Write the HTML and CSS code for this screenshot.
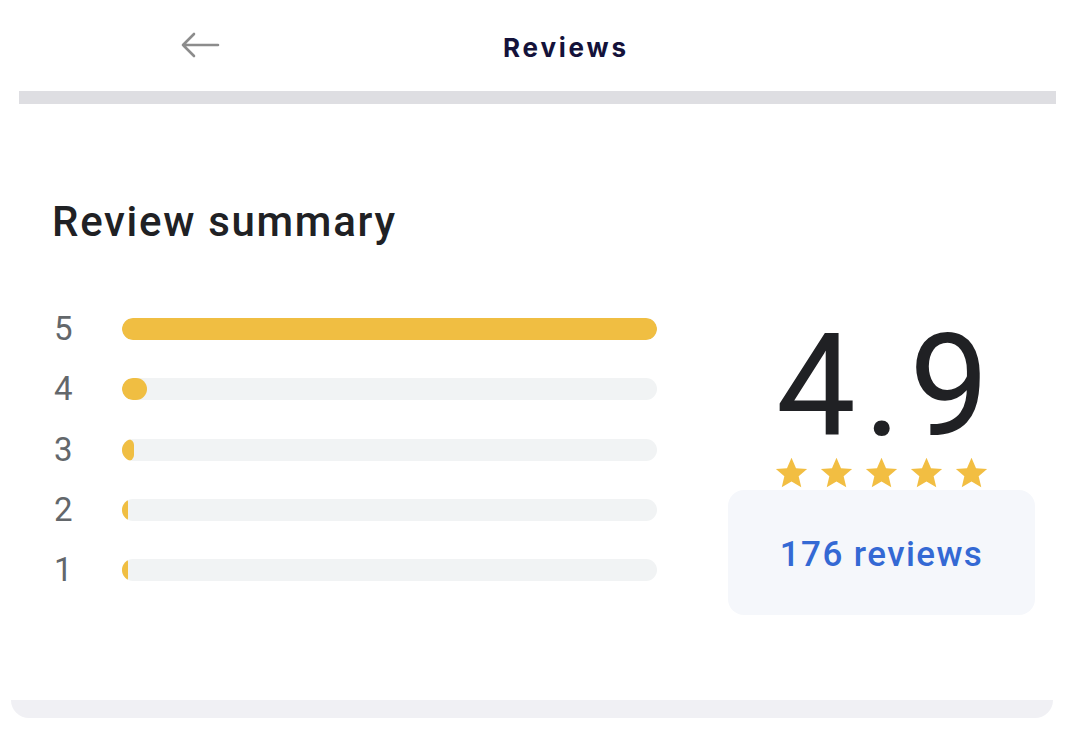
FILE: index.html
```html
<!DOCTYPE html>
<html>
<head>
<meta charset="utf-8">
<link rel="stylesheet" href="styles.css">
</head>
<body>
<div class="page">
  <header class="topbar">
    <svg class="back" width="40" height="26" viewBox="0 0 40 26">
      <path d="M38 13H3M14 2L3 13l11 11" fill="none" stroke="#8c8c8c" stroke-width="2.6" stroke-linecap="round" stroke-linejoin="round"/>
    </svg>
    <h1 class="title">Reviews</h1>
  </header>
  <div class="divider"></div>
  <main class="summary">
    <h2 class="heading">Review summary</h2>
    <div class="content">
      <div class="bars">
        <div class="row"><span class="num">5</span><div class="track"><div class="fill" style="width:100%"></div></div></div>
        <div class="row"><span class="num">4</span><div class="track"><div class="fill" style="width:25px"></div></div></div>
        <div class="row"><span class="num">3</span><div class="track"><div class="fill" style="width:12px"></div></div></div>
        <div class="row"><span class="num">2</span><div class="track"><div class="fill" style="width:6px"></div></div></div>
        <div class="row"><span class="num">1</span><div class="track"><div class="fill" style="width:6px"></div></div></div>
      </div>
      <div class="score">
        <div class="big">4.9</div>
        <div class="stars">
          <svg viewBox="0 0 24 24"><path d="M12 1.8l3.1 7.2 7.6.6-5.8 5 1.8 7.5L12 18.1l-6.7 4 1.8-7.5-5.8-5 7.6-.6z"/></svg>
          <svg viewBox="0 0 24 24"><path d="M12 1.8l3.1 7.2 7.6.6-5.8 5 1.8 7.5L12 18.1l-6.7 4 1.8-7.5-5.8-5 7.6-.6z"/></svg>
          <svg viewBox="0 0 24 24"><path d="M12 1.8l3.1 7.2 7.6.6-5.8 5 1.8 7.5L12 18.1l-6.7 4 1.8-7.5-5.8-5 7.6-.6z"/></svg>
          <svg viewBox="0 0 24 24"><path d="M12 1.8l3.1 7.2 7.6.6-5.8 5 1.8 7.5L12 18.1l-6.7 4 1.8-7.5-5.8-5 7.6-.6z"/></svg>
          <svg viewBox="0 0 24 24"><path d="M12 1.8l3.1 7.2 7.6.6-5.8 5 1.8 7.5L12 18.1l-6.7 4 1.8-7.5-5.8-5 7.6-.6z"/></svg>
        </div>
        <div class="count">176 reviews</div>
      </div>
    </div>
  </main>
  <div class="bottom"></div>
</div>
</body>
</html>
```

FILE: styles.css
```css
* { box-sizing: border-box; }
html, body { margin: 0; padding: 0; background: #ffffff; }
body { width: 1072px; height: 732px; overflow: hidden; font-family: Roboto, "Liberation Sans", sans-serif; }
.page { display: flex; flex-direction: column; }
.topbar { height: 91px; display: flex; align-items: center; padding-left: 180px; }
.back { display: block; margin-top: -2px; }
.title { margin: 4px 0 0 283px; font-family: Inter, sans-serif; font-weight: 700; font-size: 26px; letter-spacing: 2.8px; color: #14123a; }
.divider { height: 13px; margin: 0 16px 0 19px; background: #dedee2; }
.summary { height: 596px; padding: 92px 0 0 52px; }
.heading { margin: 0; font-family: Roboto, sans-serif; font-weight: 500; font-size: 42px; line-height: 52px; color: #202124; letter-spacing: 1.7px; }
.content { display: flex; margin-top: 70px; }
.bars { width: 605px; display: flex; flex-direction: column; gap: 38.3px; }
.row { display: flex; align-items: center; height: 22px; }
.num { width: 70px; font-size: 33px; color: #63676b; padding-left: 2px; line-height: 22px; }
.track { flex: 1; height: 22px; border-radius: 11px; background: #f1f3f4; overflow: hidden; }
.fill { height: 100%; border-radius: 11px; background: #f0be42; }
.score { margin-left: 71px; margin-top: -4px; width: 307px; display: flex; flex-direction: column; align-items: center; }
.big { font-size: 142px; line-height: 146px; color: #202124; letter-spacing: 8px; margin-left: 10px; }
.stars { display: flex; gap: 10px; margin-top: -5px; height: 35px; position: relative; z-index: 1; }
.stars svg { width: 35px; height: 35px; fill: #f2be42; }
.count { width: 307px; height: 125px; border-radius: 16px; background: #f5f7fb; display: flex; align-items: center; justify-content: center; padding-top: 3px; font-family: Roboto, sans-serif; font-size: 35px; font-weight: 500; color: #3469d4; letter-spacing: 1.4px; margin-top: 0; }
.bottom { height: 18px; margin: 0 19px 0 11px; background: #f0f0f4; border-radius: 0 0 18px 18px; }
```
